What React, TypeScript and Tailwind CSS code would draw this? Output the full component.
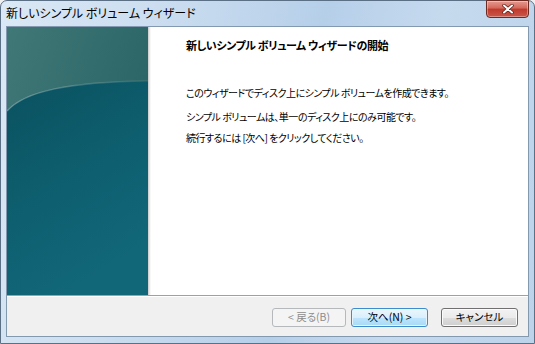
import React from "react";

const JP = "font-['Meiryo_UI','Noto_Sans_CJK_JP',sans-serif] [font-feature-settings:'palt']";

const TealPanel: React.FC = () => (
  <svg width="141" height="268" viewBox="0 0 141 268" className="block shrink-0">
    <defs>
      <linearGradient id="top" x1="0" y1="0" x2="1" y2="0.6">
        <stop offset="0" stopColor="#3f7876" />
        <stop offset="1" stopColor="#296264" />
      </linearGradient>
      <linearGradient id="low" x1="0" y1="0" x2="0.4" y2="1">
        <stop offset="0" stopColor="#0a5160" />
        <stop offset="0.6" stopColor="#0e6070" />
        <stop offset="1" stopColor="#116678" />
      </linearGradient>
      <linearGradient id="edge" x1="0" y1="0" x2="1" y2="0">
        <stop offset="0" stopColor="#ffffff" stopOpacity="0.3" />
        <stop offset="1" stopColor="#ffffff" stopOpacity="0.08" />
      </linearGradient>
    </defs>
    <rect width="141" height="268" fill="url(#top)" />
    <path d="M0,84 C18,64 62,55 141,54 L141,268 L0,268 Z" fill="url(#low)" />
    <path d="M0,84 C18,64 62,55 141,54" fill="none" stroke="url(#edge)" strokeWidth="1.5" />
  </svg>
);

const Btn: React.FC<{ label: string; kind: "disabled" | "default" | "normal"; w: string }> = ({
  label,
  kind,
  w,
}) => (
  <button
    type="button"
    className={
      `${w} h-[19px] rounded-[3px] text-[10.5px] leading-none flex items-center justify-center ${JP} ` +
      (kind === "disabled"
        ? "border border-[#b5b9bc] bg-[#f4f4f4] text-[#8d8d8d]"
        : kind === "default"
        ? "border border-[#3d8ccb] bg-[linear-gradient(#eaf6fd,#d9f0fc_50%,#bee6fd_51%,#a7d9f5)] text-black shadow-[inset_0_0_0_1px_#e6f4fc]"
        : "border border-[#707070] bg-[linear-gradient(#f2f2f2,#ebebeb_50%,#dddddd_51%,#cfcfcf)] text-black shadow-[inset_0_0_0_1px_#fbfbfb]")
    }
  >
    {label}
  </button>
);

export default function App() {
  return (
    <div className="w-[535px] h-[344px] overflow-hidden bg-[#f0f0f0]">
      <div className="w-[535px] h-[344px] flex flex-col rounded-t-[7px] border border-[#5b6f85] bg-[linear-gradient(100deg,#dbe8f5_0%,#c9dcef_30%,#b6cfe9_55%,#c6daee_75%,#bcd3ea_100%)]">
        {/* title bar */}
        <div className="h-[25px] flex items-start justify-between shrink-0">
          <div className={`pl-[5px] pt-[4px] text-[12px] leading-[16px] text-black ${JP}`}>
            新しいシンプル ボリューム ウィザード
          </div>
          <div className="mr-[5px] w-[43px] h-[18px] -mt-px rounded-b-[4px] border border-[#6b2a22] bg-[linear-gradient(#e59a8f,#d2685a_45%,#c0392b_50%,#c9574a)] flex items-center justify-center shadow-[inset_0_0_0_1px_rgba(255,255,255,0.35)]">
            <svg width="12" height="10" viewBox="0 0 12 10">
              <path d="M2,1.5 L10,8.5 M10,1.5 L2,8.5" stroke="#5a1d16" strokeWidth="3.4" strokeLinecap="round" />
              <path d="M2,1.5 L10,8.5 M10,1.5 L2,8.5" stroke="#ffffff" strokeWidth="2" strokeLinecap="round" />
            </svg>
          </div>
        </div>

        {/* client area */}
        <div className="mx-[5px] h-[311px] border border-[#8399b0] bg-[#f0f0f0] flex flex-col">
          <div className="h-[268px] flex shrink-0 bg-white">
            <TealPanel />
            <div className="w-[3px] bg-[linear-gradient(90deg,#c9c9c9,#e8e8e8,#ffffff)]" />
            <div className={`flex-1 pl-[35px] pt-[11px] text-black ${JP}`}>
              <div className="text-[11px] font-bold leading-[14px] tracking-[-0.4px]">
                新しいシンプル ボリューム ウィザードの開始
              </div>
              <div className="mt-[34px] text-[10px] leading-[14px] tracking-[-0.5px]">
                このウィザードでディスク上にシンプル ボリュームを作成できます。
              </div>
              <div className="mt-[10px] text-[10px] leading-[14px] tracking-[-0.5px]">
                シンプル ボリュームは、単一のディスク上にのみ可能です。
              </div>
              <div className="mt-[7px] text-[10px] leading-[14px] tracking-[-0.5px]">
                続行するには [次へ] をクリックしてください。
              </div>
            </div>
          </div>
          <div className="h-px bg-[#a0a0a0]" />
          <div className="h-px bg-white" />
          <div className="flex-1 flex items-start justify-end pt-[11px] pr-[10px]">
            <Btn label="< 戻る(B)" kind="disabled" w="w-[74px]" />
            <div className="w-[5px]" />
            <Btn label="次へ(N) >" kind="default" w="w-[77px]" />
            <div className="w-[13px]" />
            <Btn label="キャンセル" kind="normal" w="w-[77px]" />
          </div>
        </div>
      </div>
    </div>
  );
}
